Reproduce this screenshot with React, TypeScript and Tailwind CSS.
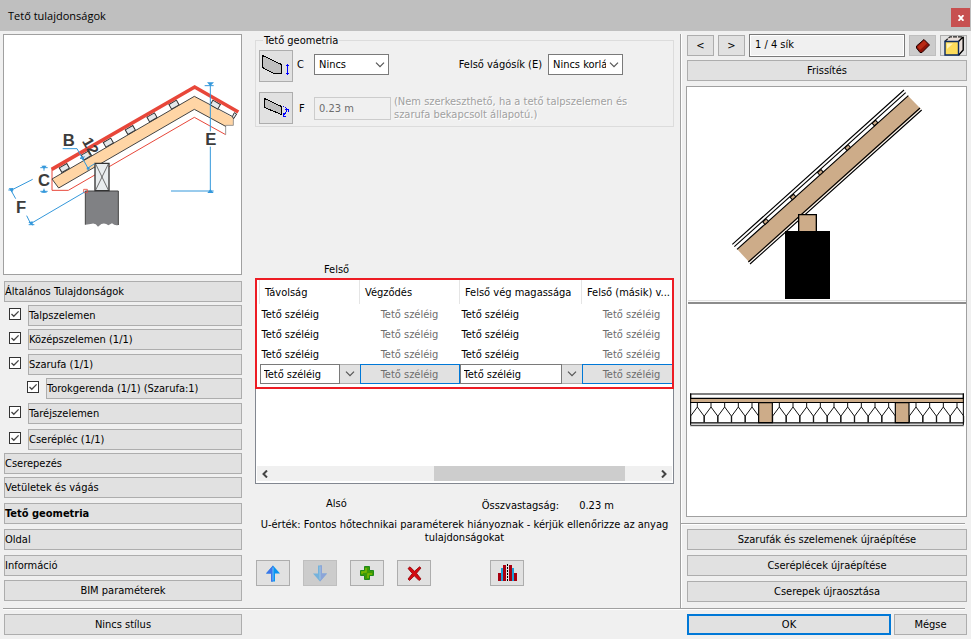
import { useState } from 'react';
import type { ReactNode } from 'react';
import { twMerge } from 'tailwind-merge';

const navItems = [
  { id: 'general', label: 'Általános Tulajdonságok', gap: 'mt-0' },
  { id: 'talp', label: 'Talpszelemen', gap: 'mt-[3px]', check: true },
  { id: 'kozep', label: 'Középszelemen (1/1)', gap: 'mt-[3px]', check: true },
  { id: 'szarufa', label: 'Szarufa (1/1)', gap: 'mt-1', check: true },
  { id: 'torok', label: 'Torokgerenda (1/1) (Szarufa:1)', gap: 'mt-[3px]', check: true, nested: true },
  { id: 'tarej', label: 'Taréjszelemen', gap: 'mt-1', check: true },
  { id: 'lec', label: 'Cserépléc (1/1)', gap: 'mt-[5px]', check: true },
  { id: 'cserepezes', label: 'Cserepezés', gap: 'mt-[3px]' },
  { id: 'vetulet', label: 'Vetületek és vágás', gap: 'mt-[3px]' },
  { id: 'geometria', label: 'Tető geometria', gap: 'mt-[5px]' },
  { id: 'oldal', label: 'Oldal', gap: 'mt-[5px]' },
  { id: 'info', label: 'Információ', gap: 'mt-[5px]' },
];

const rows = [1, 2, 3];
const EDGE = 'Tető széléig';

function Btn({
  children,
  className = '',
  ...rest
}: React.ButtonHTMLAttributes<HTMLButtonElement> & { children: ReactNode }) {
  return (
    <button
      type="button"
      className={twMerge(
        'flex h-[21px] items-center justify-center border border-[#adadad] bg-[#e1e1e1] hover:border-[#0078d7]',
        className
      )}
      {...rest}
    >
      {children}
    </button>
  );
}

function Chevron() {
  return (
    <svg viewBox="0 0 10 6" className="pointer-events-none h-[6px] w-[10px]" fill="none" stroke="#555" strokeWidth="1.2">
      <path d="M1 .7 5 4.7 9 .7" />
    </svg>
  );
}

function Check({ label, checked, onChange }: { label: string; checked: boolean; onChange: () => void }) {
  return (
    <span className="relative mt-[3px] h-3 w-3 shrink-0">
      <input
        type="checkbox"
        aria-label={label}
        checked={checked}
        onChange={onChange}
        className="block h-3 w-3 appearance-none border border-[#333] bg-white"
      />
      {checked && (
        <svg viewBox="0 0 12 12" className="pointer-events-none absolute inset-0" fill="none" stroke="#444" strokeWidth="1.3">
          <path d="M2.5 6 4.8 8.3 9.6 3.4" />
        </svg>
      )}
    </span>
  );
}

function Combo({ id, options, className }: { id: string; options: string[]; className: string }) {
  return (
    <span className={`relative block ${className}`}>
      <select id={id} className="block h-[21px] w-full appearance-none border border-[#7a7a7a] bg-white pr-4 pl-1">
        {options.map((o) => (
          <option key={o}>{o}</option>
        ))}
      </select>
      <span className="pointer-events-none absolute top-2 right-1">
        <Chevron />
      </span>
    </span>
  );
}

function RoofDiagram() {
  return (
    <svg viewBox="12 105 711 717" className="block h-auto w-full" role="img" aria-label="Tető metszet">
      <path d="M156 505V571H205L583 352 677 404" fill="none" stroke="#e8473a" strokeWidth="3" />
      <path d="M156 537 583 289 702 355 700 377H677V380L583 328 176 564Z" fill="#ffd5a5" />
      <path d="M700 352V376H677V404" fill="none" stroke="#999" strokeWidth="3" />
      <path d="M702 352 583 289 156 537 176 564 583 328 677 379" fill="none" stroke="#444" strokeWidth="3" />
      <g fill="#e3e8eb" stroke="#333" strokeWidth="3">
        {[193, 259, 325, 391, 456, 522].map((x, i) => (
          <path key={x} d="M-13-8H13V8H-13Z" transform={`translate(${x} ${504 - i * 38}) rotate(-30)`} />
        ))}
        <path d="M-13-8H13V8H-13Z" transform="translate(646 314) rotate(30)" />
        <path d="M697 350 703 338 710 342 701 356Z" />
      </g>
      <path d="M155 508 584 261 715 336" fill="none" stroke="#e8473a" strokeWidth="11" />
      <path d="M256 573H355V675Q345 678 336 670L325 676Q316 668 304 672L294 680Q286 667 272 672L256 674Z" fill="#808184" />
      <path d="M256 674V573H355V675" fill="none" stroke="#444" strokeWidth="3" />
      <path d="M285 490H327V572H285Z" fill="#e9edef" stroke="#333" strokeWidth="4" />
      <path d="M287 492 325 570M325 492 287 570" stroke="#555" strokeWidth="2.5" />
      <path d="M251 568H262V578H251Z" fill="none" stroke="#e8473a" strokeWidth="2.5" />
      <g fill="none" stroke="#3498db" strokeWidth="3">
        <path d="M631 250V394M631 440V578M513 573H641M614 257H641" />
        <path d="M121 503H143M132 497V512M121 574H143M132 566V579" />
        <path d="M98 538 33 571 47 596M80 647 92 671 254 576M25 570H40M86 674H103" />
        <path d="M188 446H231L266 508M240 476 254 470M260 506 284 491" />
      </g>
      <g fill="#3498db">
        <path d="M621 247H642L631 258ZM622 579 631 568 641 579ZM124 497H140L132 507ZM123 578 132 569 141 578Z" />
        <path d="M26 565 40 564 37 578ZM85 667 98 664 98 677ZM240 472 253 472 248 481ZM260 500 271 503 263 512Z" />
      </g>
      <g className="font-['Liberation_Sans',sans-serif] text-[50px] font-bold" fill="#3c3c3c">
        <text x="188" y="439">B</text>
        <text x="114" y="557">C</text>
        <text x="616" y="434">E</text>
        <text x="48" y="639">F</text>
        <text x="0" y="0" className="text-[46px]" transform="translate(245 424) rotate(60)">12</text>
      </g>
    </svg>
  );
}

function SectionPreview() {
  const cells = [
    ...[0, 1, 2, 3, 4].map((i) => 32 + i * 41),
    ...[0, 1, 2, 3, 4, 5, 6, 7, 8].map((i) => 278 + i * 41),
    ...[0, 1, 2, 3].map((i) => 688 + i * 41),
  ];
  return (
    <svg viewBox="21 261 837 1287" className="block h-auto w-full" role="img" aria-label="Szarufa előnézet">
      <path d="M684 287 722 326 208 787 172 748Z" fill="#cdac89" />
      <g stroke="#000" strokeWidth="3.4" fill="none">
        <path d="M672 270 157 733M677 278 163 740M685 287 171 748" />
        <path d="M720 324 205 786M725 330 210 792" />
      </g>
      <g fill="#cdac89" stroke="#000" strokeWidth="3">
        {[0, 1, 2, 3, 4].map((i) => (
          <path key={i} d="M-7-5H7V5H-7Z" transform={`translate(${257 + i * 82} ${665 - i * 74}) rotate(-42)`} />
        ))}
        <path d="M356 644H409V697H356Z" strokeWidth="4" />
      </g>
      <path d="M315 693H450V897H315Z" />
      <path d="M24 902H858" stroke="#ddd" strokeWidth="3" />
      <path d="M24 909H858" stroke="#666" strokeWidth="5" />
      <path d="M32 1182H850V1195H32Z" fill="#fff" stroke="#000" strokeWidth="3.5" />
      <path d="M30 1197H852V1207H30Z" fill="#cdac89" />
      <path d="M30 1207.5H852" stroke="#000" strokeWidth="3" />
      <path d="M30 1268.5H852" stroke="#000" strokeWidth="4" />
      <path d="M32 1180V1276H850V1180" fill="none" stroke="#000" strokeWidth="3" />
      <path d="M30 1278H852" stroke="#999" strokeWidth="2" />
      <g fill="none" stroke="#111" strokeWidth="3">
        {cells.map((x) => (
          <path key={x} d={`M${x} 1267V1248L${x + 20} 1221V1208M${x + 20} 1221L${x + 40} 1248V1267`} />
        ))}
      </g>
      <path d="M236 1208H277V1268H236ZM646 1208H687V1268H646Z" fill="#cdac89" stroke="#000" strokeWidth="3.5" />
    </svg>
  );
}

function Arrow({ faded = false }: { faded?: boolean }) {
  return (
    <svg viewBox="0 0 16 17" className={`h-[17px] w-4 ${faded ? 'rotate-180 opacity-45' : ''}`}>
      <path d="M8 .5 15 8.5H10V16.5H6V8.5H1Z" fill="#0a94f0" />
      <path d="M8 .5V16.5H6V8.5H1Z" fill="#3f74e8" />
      <path d="M8 2.5V15.5" stroke="#6cc4ff" strokeWidth="1" />
    </svg>
  );
}

export default function App() {
  const [active, setActive] = useState('geometria');
  const [off, setOff] = useState<string[]>([]);

  const toggle = (id: string) =>
    setOff((cur) => (cur.includes(id) ? cur.filter((x) => x !== id) : [...cur, id]));

  return (
    <main className="min-h-screen bg-[#f0f0f0] font-['DejaVu_Sans_Condensed','Noto_Sans',sans-serif] text-[11px] leading-[13px] text-black">
      <header className="flex h-[31px] items-center justify-between bg-[#bfbfbf] pl-2">
        <h1 className="font-['Open_Sans',sans-serif] text-[11px]">Tető tulajdonságok</h1>
        <button
          type="button"
          aria-label="Bezárás"
          className="mt-1 mr-px flex h-[19px] w-[19px] items-center justify-center bg-[#c75050] text-white"
        >
          <svg viewBox="0 0 6 6" className="h-[6px] w-[6px]" stroke="currentColor" strokeWidth="1.9">
            <path d="M.5.2 5.5 5.8M5.5.2.5 5.8" />
          </svg>
        </button>
      </header>

      <div className="flex">
        <nav className="w-[242px] shrink-0 pt-[3px] pl-[3px]">
          <div className="border border-[#a0a0a0] bg-white">
            <RoofDiagram />
          </div>
          <ul className="mt-[6px] pl-px">
            {navItems.map((item) => (
              <li key={item.id} className={`flex items-start ${item.gap} ${item.nested ? 'pl-[23px]' : item.check ? 'pl-[5px]' : ''}`}>
                {item.check && (
                  <Check label={item.label} checked={!off.includes(item.id)} onChange={() => toggle(item.id)} />
                )}
                <button
                  type="button"
                  onClick={() => setActive(item.id)}
                  className={`h-[21px] flex-1 border border-[#adadad] bg-[#e1e1e1] text-left ${item.check ? 'ml-[7px]' : ''} ${
                    active === item.id ? 'font-bold' : ''
                  }`}
                >
                  {item.label}
                </button>
              </li>
            ))}
          </ul>
          <div className="mt-1 pb-[7px] pl-px">
            <Btn className="w-full">BIM paraméterek</Btn>
          </div>
        </nav>

        <section className="min-w-0 flex-1 pt-[3px] pr-[6px] pl-[13px]">
          <fieldset className="h-[93px] border border-[#dcdcdc] px-[3px]">
            <legend className="ml-1 px-px">Tető geometria</legend>
            <div className="flex items-start pt-[3px]">
              <Btn aria-label="C" className="h-[32px] w-[34px]">
                <svg viewBox="0 0 30 24" className="h-6 w-[30px] shrink-0" shapeRendering="crispEdges">
                  <path d="M1.5 1.5 20.5 10.5V19.5H13L1.5 13.5Z" fill="#c0c0c0" stroke="#000" />
                  <path d="M26 10H27V21H26ZM25 11H28V12H25ZM25 19H28V20H25Z" fill="#00f" />
                </svg>
              </Btn>
              <label htmlFor="eave" className="mt-2 w-[21px] pl-1">C</label>
              <Combo id="eave" options={['Nincs']} className="mt-1 w-[75px]" />
              <label htmlFor="ridge" className="mt-2 ml-auto">Felső vágósík (E)</label>
              <Combo id="ridge" options={['Nincs korlát']} className="mt-1 mr-[47px] ml-[6px] w-[75px]" />
            </div>
            <div className="mt-[10px] flex items-center">
              <Btn aria-label="F" className="h-[32px] w-[34px]">
                <svg viewBox="0 0 30 24" className="h-6 w-[30px] shrink-0" shapeRendering="crispEdges">
                  <path d="M3.5 2.5 20.5 10.5V18.5L3.5 11.5Z" fill="#c0c0c0" stroke="#000" />
                  <path d="M22 10.5 26 13" stroke="#00f" strokeDasharray="1 1" />
                  <path d="M22.5 20 26.5 13.5M24 13.5H27.5V16M22.5 17V20.5H25" fill="none" stroke="#00f" />
                </svg>
              </Btn>
              <label htmlFor="plumb" className="w-[21px] pl-[6px]">F</label>
              <input
                id="plumb"
                disabled
                defaultValue="0.23 m"
                className="h-[23px] w-[77px] border border-[#ccc] bg-[#f0f0f0] px-1 text-[#6d6d6d]"
              />
              <p className="ml-[3px] w-[250px] text-[#a0a0a0] text-shadow-[1px_1px_0_#fff]">
                (Nem szerkeszthető, ha a tető talpszelemen és szarufa bekapcsolt állapotú.)
              </p>
            </div>
          </fieldset>

          <p className="mt-[136px] pl-[69px]">Felső</p>

          <div className="relative mt-[2px] h-[206px] border border-[#828790] bg-white">
            <div className="h-[187px] overflow-hidden pl-[3px]">
              <table className="w-[422px] table-fixed border-collapse">
                <colgroup>
                  <col className="w-[100px]" />
                  <col className="w-[100px]" />
                  <col className="w-[122px]" />
                  <col className="w-[100px]" />
                </colgroup>
                <thead>
                  <tr className="h-[25px] text-left whitespace-nowrap">
                    {['Távolság', 'Végződés', 'Felső vég magassága', 'Felső (másik) v...'].map((h) => (
                      <th key={h} className="border-l border-[#e5e5e5] p-0 pt-[2px] pl-[5px] font-normal">
                        {h}
                      </th>
                    ))}
                  </tr>
                </thead>
                <tbody>
                  {rows.map((r) => (
                    <tr key={r} className="h-5">
                      <td className="p-0 pl-[2px]">{EDGE}</td>
                      <td className="p-0 text-center text-[#6d6d6d]">{EDGE}</td>
                      <td className="p-0 pl-[2px]">{EDGE}</td>
                      <td className="p-0 text-center text-[#6d6d6d]">{EDGE}</td>
                    </tr>
                  ))}
                  <tr className="h-5">
                    {['Távolság', 'Felső vég magassága'].map((name) => [
                      <td key={name} className="p-0">
                        <div className="flex">
                          <input
                            aria-label={name}
                            defaultValue={EDGE}
                            className="h-5 min-w-0 flex-1 border border-[#7a7a7a] bg-white px-[3px]"
                          />
                          <button type="button" aria-label="Lista" className="flex h-5 w-5 items-center justify-center border-y border-[#adadad] bg-[#e1e1e1]">
                            <Chevron />
                          </button>
                        </div>
                      </td>,
                      <td key={`${name}-btn`} className="p-0">
                        <button type="button" className="block h-5 w-full border border-[#0078d7] bg-[#e1e1e1] text-[#6d6d6d]">
                          {EDGE}
                        </button>
                      </td>,
                    ])}
                  </tr>
                </tbody>
              </table>
            </div>
            <div className="mx-px flex h-[15px] items-center bg-[#f0f0f0]">
              <button type="button" aria-label="Balra" className="flex w-4 justify-center">
                <svg viewBox="0 0 6 8" className="h-2 w-[6px]" fill="none" stroke="#444" strokeWidth="2">
                  <path d="M5 .5 1.5 4 5 7.5" />
                </svg>
              </button>
              <div className="flex h-full flex-1">
                <div className="ml-[42%] h-full w-1/2 bg-[#cdcdcd]" />
              </div>
              <button type="button" aria-label="Jobbra" className="flex w-4 justify-center">
                <svg viewBox="0 0 6 8" className="h-2 w-[6px]" fill="none" stroke="#444" strokeWidth="2">
                  <path d="M1 .5 4.5 4 1 7.5" />
                </svg>
              </button>
            </div>
            <div className="pointer-events-none absolute -inset-x-px -top-px h-[111px] border-2 border-[#ed1c24]" />
          </div>

          <div className="mt-[13px] flex items-start pl-[71px]">
            <p>Alsó</p>
            <p className="ml-auto pt-[2px]">Összvastagság:</p>
            <p className="mr-[60px] ml-5 pt-[2px]">0.23 m</p>
          </div>
          <p className="mt-[6px] text-center">
            U-érték: Fontos hőtechnikai paraméterek hiányoznak - kérjük ellenőrizze az anyag tulajdonságokat
          </p>

          <div className="mt-4 flex gap-[13px] pl-px">
            <Btn aria-label="Fel" className="h-[26px] w-[34px]">
              <Arrow />
            </Btn>
            <Btn aria-label="Le" disabled className="h-[26px] w-[34px] border-[#bfbfbf] bg-[#ccc]">
              <Arrow faded />
            </Btn>
            <Btn aria-label="Hozzáadás" className="h-[26px] w-[34px]">
              <svg viewBox="0 0 14 14" className="h-[14px] w-[14px]">
                <path d="M4.5.5H9.5V4.5H13.5V9.5H9.5V13.5H4.5V9.5H.5V4.5H4.5Z" fill="#3c9a08" stroke="#1f8a1a" />
                <path d="M6 2V6H2V8M8 12V8H12" fill="none" stroke="#7fb800" strokeWidth="1.5" />
              </svg>
            </Btn>
            <Btn aria-label="Törlés" className="h-[26px] w-[34px]">
              <svg viewBox="0 0 15 15" className="h-[15px] w-[15px]">
                <path d="M1 2.5 3 .8 7.5 5.3 12.5.8 14 2 9.5 7.3 14 13 12 14.5 7.3 9.8 2.5 14.5 1 13 5.3 7.5Z" fill="#d40c12" stroke="#8e0006" strokeWidth=".8" />
              </svg>
            </Btn>
            <Btn aria-label="Tükrözés" className="ml-[46px] h-[26px] w-[34px]">
              <svg viewBox="0 0 19 18" className="h-[18px] w-[19px]" shapeRendering="crispEdges">
                <path d="M0 9H3V17H0ZM5 1H8V17H5ZM11 1H14V17H11ZM16 9H19V17H16Z" fill="#a80010" />
                <path d="M3 4H5V17H3ZM14 4H16V17H14Z" fill="#1ba0d8" />
                <path d="M9.5 0V18" stroke="#000" strokeDasharray="2 1" />
              </svg>
            </Btn>
          </div>
        </section>

        <aside className="mt-[3px] w-[291px] shrink-0 border-l border-[#a0a0a0] pr-1 shadow-[inset_1px_0_0_#fff]">
          <div className="flex items-start gap-1 pt-px pl-[6px]">
            <Btn aria-label="Előző" className="w-[27px]">&lt;</Btn>
            <Btn aria-label="Következő" className="w-[27px]">&gt;</Btn>
            <input
              aria-label="Sík"
              readOnly
              value="1 / 4 sík"
              className="-mt-px h-[23px] min-w-0 flex-1 border border-[#7a7a7a] bg-[#f0f0f0] px-[5px] pb-[2px] shadow-[inset_0_0_0_1px_#fff]"
            />
            <Btn aria-label="Anyag" className="w-[27px] border-[#bfbfbf] bg-[#ccc]">
              <svg viewBox="0 0 14 14" className="h-[14px] w-[14px]">
                <path d="M8 .5 13.5 6 6 13.5H4L.5 9V7Z" fill="#8e1206" stroke="#200" />
                <path d="M8 1.5 11 4.5 4 11 1.5 8Z" fill="#b82a14" />
              </svg>
            </Btn>
            <Btn aria-label="Térbeli nézet" className="w-[27px]">
              <svg viewBox="0 0 20 20" className="h-5 w-5 shrink-0">
                <path d="M.8 5.5 6 .8H19.2V14L14.5 19.2V5.5Z" fill="#eadfda" />
                <path d="M.8 5.5 6 .8H19.2" fill="none" stroke="#222" strokeWidth="1.2" strokeDasharray="4 1" />
                <path d="M19.2.8V14L14.5 19.2M14.5 5.5 19 1" fill="none" stroke="#000" strokeWidth="1.4" />
                <path d="M1 5.5H14.5V19H1Z" fill="#fddc5c" stroke="#0c2a60" strokeWidth="1.4" />
                <path d="M3 7.5H9L3 13Z" fill="#fff3b8" />
              </svg>
            </Btn>
          </div>
          <div className="mt-[3px] pl-[6px]">
            <Btn className="w-full">Frissítés</Btn>
          </div>
          <div className="mt-[5px] ml-[5px] border border-[#a0a0a0] bg-white">
            <SectionPreview />
          </div>
          <hr className="mt-[6px] mr-[2px] border-[#a0a0a0] shadow-[0_1px_0_#fff]" />
          <div className="mt-[5px] flex flex-col gap-[5px] pb-[6px] pl-[6px]">
            <Btn>Szarufák és szelemenek újraépítése</Btn>
            <Btn>Cseréplécek újraépítése</Btn>
            <Btn>Cserepek újraosztása</Btn>
          </div>
        </aside>
      </div>

      <hr className="mr-[6px] ml-[3px] border-[#a0a0a0] shadow-[0_1px_0_#fff]" />
      <footer className="flex pt-[5px] pr-1 pb-1 pl-1">
        <Btn className="w-[238px]">Nincs stílus</Btn>
        <Btn className="ml-auto w-[204px] border-2 border-[#0078d7]">OK</Btn>
        <Btn className="ml-[3px] w-[73px]">Mégse</Btn>
      </footer>
    </main>
  );
}
